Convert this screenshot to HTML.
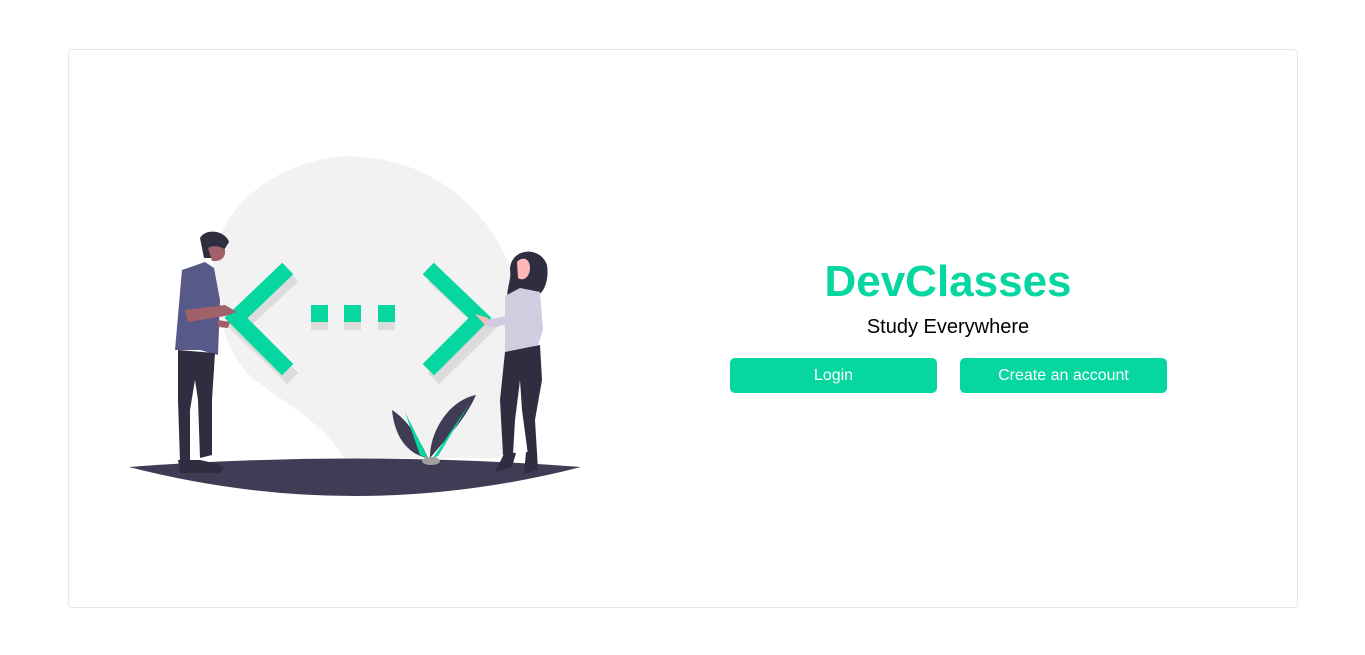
<!DOCTYPE html>
<html><head><meta charset="utf-8"><style>
html,body{margin:0;padding:0;background:#fff;width:1365px;height:655px;overflow:hidden;font-family:"Liberation Sans",sans-serif}
.card{position:absolute;left:68px;top:49px;width:1230px;height:559px;border:1px solid #e6e6e6;border-radius:4px;box-sizing:border-box}
svg{position:absolute;left:0;top:0}
.title{position:absolute;left:748px;width:400px;top:257px;text-align:center;font-size:44px;font-weight:bold;color:#06d6a0;letter-spacing:0px;font-family:"Comic Sans MS","Liberation Sans",sans-serif}
.sub{position:absolute;left:748px;width:400px;top:316px;text-align:center;font-size:20px;color:#000}
.btn{position:absolute;top:358px;width:207px;height:35px;background:#06d6a0;color:#fff;border-radius:5px;font-size:16px;line-height:35px;text-align:center}
</style></head><body>
<div class="card"></div>
<svg width="1365" height="655">
<path d="M215,290 C200,200 300,150 360,157 C450,162 500,230 515,280 C530,340 520,420 505,458 L345,458 C320,420 280,400 255,380 C230,360 222,330 215,290Z" fill="#f2f2f2"/>
<g fill="none" stroke="#dcdcdc" stroke-width="16" stroke-linecap="square"><polyline points="287,281 239,326 287,373"/><polyline points="439,281 487,326 439,373"/></g>
<g fill="#dcdcdc"><rect x="311" y="313" width="17" height="17"/><rect x="344" y="313" width="17" height="17"/><rect x="378" y="313" width="17" height="17"/></g>
<g fill="none" stroke="#06d6a0" stroke-width="16" stroke-linecap="square"><polyline points="282,274 236,318 282,364"/><polyline points="434,274 480,318 434,364"/></g>
<g fill="#06d6a0"><rect x="311" y="305" width="17" height="17"/><rect x="344" y="305" width="17" height="17"/><rect x="378" y="305" width="17" height="17"/></g>
<path d="M129,467 Q355,450 581,467 Q355,525 129,467Z" fill="#3f3d56"/>
<path d="M392,410 C395,440 410,455 428,458 C420,440 408,420 392,410Z" fill="#3f3d56"/>
<path d="M405,412 L428,458 L420,455Z" fill="#06d6a0"/>
<path d="M476,395 C450,400 430,430 430,458 C445,440 465,420 476,395Z" fill="#3f3d56"/>
<path d="M470,403 L433,458 L438,456Z" fill="#06d6a0"/>
<ellipse cx="431" cy="461" rx="9" ry="4" fill="#a0a0a0"/>
<path d="M200,238 C205,228 225,230 229,242 L224,250 L215,258 L204,258Z" fill="#2f2e41"/>
<path d="M208,248 C212,245 222,246 225,250 C226,258 220,262 212,261Z" fill="#a0616a"/>
<path d="M182,270 L205,262 L214,268 L220,300 L218,355 L200,350 L175,350 Z" fill="#575a89"/>
<path d="M178,350 L215,353 L212,400 L212,455 L200,458 L198,400 L195,380 L190,410 L190,462 L180,462 L178,400Z" fill="#2f2e41"/>
<path d="M178,460 L200,460 L218,464 L224,468 L220,473 L180,473Z" fill="#2f2e41"/>
<path d="M185,310 L225,305 L237,312 L225,316 L188,322Z" fill="#a0616a"/>
<path d="M218,320 L230,322 L228,328 L218,327Z" fill="#a0616a"/>
<path d="M510,270 C510,248 540,245 547,265 C550,285 540,300 530,296 L508,302 C505,290 512,280 510,270Z" fill="#2f2e41"/>
<path d="M517,262 C522,256 530,258 530,268 C530,276 524,282 518,278Z" fill="#ffb8b8"/>
<path d="M505,296 L520,288 L540,292 L543,330 L538,345 L505,355 Z" fill="#d0cde1"/>
<path d="M485,320 L508,316 L510,324 L488,328Z" fill="#d0cde1"/>
<path d="M475,314 L488,318 L486,326 Z" fill="#ffb8b8"/>
<path d="M505,352 L540,345 L542,380 L535,420 L537,453 L528,455 L522,410 L520,380 L515,420 L513,455 L503,455 L500,400Z" fill="#2f2e41"/>
<path d="M505,452 L516,453 L512,467 L495,472 L500,462Z" fill="#2f2e41"/>
<path d="M526,452 L537,453 L538,470 L524,474Z" fill="#2f2e41"/>
</svg>
<div class="title">DevClasses</div>
<div class="sub">Study Everywhere</div>
<div class="btn" style="left:730px">Login</div>
<div class="btn" style="left:960px">Create an account</div>
</body></html>
